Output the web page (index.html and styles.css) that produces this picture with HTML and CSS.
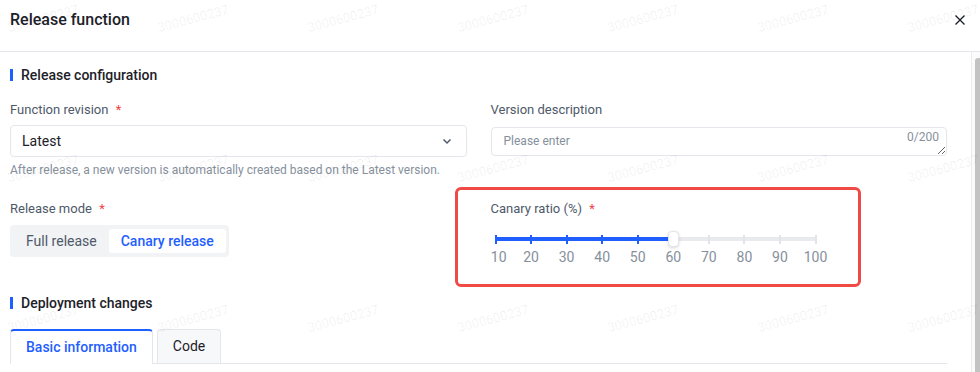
FILE: index.html
```html
<!DOCTYPE html>
<html lang="en">
<head>
  <meta charset="UTF-8" />
  <meta name="viewport" content="width=device-width, initial-scale=1.0"/>
  <title>Release function</title>
  <link rel="stylesheet" href="styles.css">
</head>
<body>
  <div class="modal">
    <!-- Header -->
    <div class="modal-header">
      <h1>Release function</h1>
      <button class="close-btn" aria-label="Close">
        <svg width="10" height="10" viewBox="0 0 10 10"><path d="M0.5 0.5L9.5 9.5M9.5 0.5L0.5 9.5" stroke="#1d2129" stroke-width="1.4" fill="none"/></svg>
      </button>
    </div>

    <!-- Body -->
    <div class="modal-body">
      <div class="content">
        <h2 class="section-title">Release configuration</h2>

        <div class="form-grid">
          <div class="field">
            <label class="field-label">Function revision <span class="req">*</span></label>
            <div class="select">
              <span>Latest</span>
              <svg width="12" height="12" viewBox="0 0 12 12"><path d="M2.5 4.5L6 8L9.5 4.5" stroke="#4e5969" stroke-width="1.5" fill="none"/></svg>
            </div>
            <p class="help">After release, a new version is automatically created based on the Latest version.</p>
          </div>

          <div class="field">
            <label class="field-label">Version description</label>
            <div class="textarea-wrap">
              <textarea placeholder="Please enter"></textarea>
              <span class="counter">0/200</span>
            </div>
          </div>

          <div class="field field-mode">
            <label class="field-label">Release mode <span class="req">*</span></label>
            <div class="segmented">
              <span class="seg-item">Full release</span>
              <span class="seg-item active">Canary release</span>
            </div>
          </div>

          <div class="field highlight">
            <label class="field-label">Canary ratio (%) <span class="req">*</span></label>
            <div class="slider">
              <div class="slider-rail">
                <div class="slider-track"></div>
                <span class="tick on" style="left:0%"></span>
                <span class="tick on" style="left:11.11%"></span>
                <span class="tick on" style="left:22.22%"></span>
                <span class="tick on" style="left:33.33%"></span>
                <span class="tick on" style="left:44.44%"></span>
                <span class="tick" style="left:66.67%"></span>
                <span class="tick" style="left:77.78%"></span>
                <span class="tick" style="left:88.89%"></span>
                <span class="tick" style="left:100%"></span>
                <span class="thumb" style="left:55.56%"></span>
              </div>
              <div class="marks">
                <span style="left:1%">10</span>
                <span style="left:11.11%">20</span>
                <span style="left:22.22%">30</span>
                <span style="left:33.33%">40</span>
                <span style="left:44.44%">50</span>
                <span style="left:55.56%">60</span>
                <span style="left:66.67%">70</span>
                <span style="left:77.78%">80</span>
                <span style="left:88.89%">90</span>
                <span style="left:100%">100</span>
              </div>
            </div>
          </div>
        </div>

        <h2 class="section-title section-deploy">Deployment changes</h2>

        <div class="tabs">
          <span class="tab active">Basic information</span>
          <span class="tab">Code</span>
        </div>
      </div>
      <div class="scrollbar"><div class="scroll-thumb"></div></div>
    </div>

    <!-- Watermark -->
    <div class="watermark">
      <span>3000600237</span><span>3000600237</span><span>3000600237</span><span>3000600237</span><span>3000600237</span><span>3000600237</span><span>3000600237</span>
      <span>3000600237</span><span>3000600237</span><span>3000600237</span><span>3000600237</span><span>3000600237</span><span>3000600237</span><span>3000600237</span>
      <span>3000600237</span><span>3000600237</span><span>3000600237</span><span>3000600237</span><span>3000600237</span><span>3000600237</span><span>3000600237</span>
    </div>
  </div>
</body>
</html>
```

FILE: styles.css
```css
* { margin:0; padding:0; box-sizing:border-box; }
html, body { height:100%; background:#fff; }
body { font-family:Roboto, "Liberation Sans", sans-serif; color:#1d2129; overflow:hidden; }

.modal { position:relative; height:372px; display:flex; flex-direction:column; overflow:hidden; }

/* header */
.modal-header { display:flex; justify-content:space-between; align-items:center; padding:8px 15px 19px 10px; border-bottom:1px solid #e5e6eb; }
.modal-header h1 { font-size:16px; font-weight:500; line-height:24px; color:#1d2129; }
.close-btn { border:0; background:none; width:10px; height:10px; display:flex; }

/* body */
.modal-body { flex:1; display:flex; min-height:0; }
.content { flex:1; padding:12px 24px 0 10px; }
.scrollbar { width:9px; border-left:1px solid #ececec; padding:6px 0 0 3px; background:#fbfbfb; }
.scroll-thumb { height:100%; background:#c3c3c3; border-radius:3px 0 0 0; }

.section-title { position:relative; font-size:14px; font-weight:500; line-height:22px; padding-left:11px; color:#1d2129; }
.section-title::before { content:""; position:absolute; left:0; top:5px; width:3px; height:12px; background:#1f5eff; }
.section-deploy { margin-top:35px; }

/* form */
.form-grid { display:grid; grid-template-columns:1fr 1fr; column-gap:24px; row-gap:20px; margin-top:14px; align-items:start; }
.field-label { display:block; font-size:13px; line-height:20px; color:#4e5969; }
.req { color:#f53f3f; margin-left:4px; }

.select { display:flex; justify-content:space-between; align-items:center; height:32px; margin-top:5px; padding:0 13px 0 11px; border:1px solid #e5e6eb; border-radius:4px; font-size:14px; line-height:30px; color:#1d2129; }
.help { margin-top:4px; font-size:12px; line-height:18px; color:#86909c; }

.textarea-wrap { position:relative; margin-top:7px; }
.textarea-wrap textarea { display:block; width:100%; height:29px; padding:6px 12px; border:1px solid #e5e6eb; border-radius:4px; font-family:inherit; font-size:12px; line-height:15px; color:#1d2129; outline:none; resize:vertical; }
.textarea-wrap textarea::placeholder { color:#86909c; }
.counter { position:absolute; right:8px; top:3px; font-size:12px; color:#86909c; }

.segmented { display:inline-flex; margin-top:6px; padding:4px 3px 4px 4px; background:#f2f3f5; border-radius:4px; }
.seg-item { padding:0 12px; line-height:24px; font-size:14px; color:#4e5969; border-radius:3px; }
.seg-item.active { background:#fff; color:#1f5eff; font-weight:500; }

/* highlighted canary ratio field */
.highlight { margin:-12px 86px -40px -36px; padding:9px 10px 17px 33px; border:3px solid #f04a44; border-radius:6px; }
.slider { margin-top:12px; padding:0 0 0 5px; width:330px; }
.slider-rail { position:relative; height:16px; width:320px; }
.slider-rail::before { content:""; position:absolute; left:0; right:0; top:6px; height:4px; background:#e8eaee; }
.slider-track { position:absolute; left:0; width:55.56%; top:6px; height:4px; background:#1f5eff; }
.tick { position:absolute; top:4px; width:2px; height:9px; margin-left:-1px; background:#e1e4e9; }
.tick.on { background:#1f5eff; }
.thumb { position:absolute; top:0; width:11px; height:16px; margin-left:-5px; background:#fff; border:1px solid #e3e5ea; border-radius:4px; box-shadow:0 1px 3px rgba(0,0,0,0.15); }
.marks { position:relative; height:20px; width:320px; }
.marks span { position:absolute; top:0; transform:translateX(-50%); font-size:14px; line-height:20px; color:#86909c; }

/* tabs */
.tabs { display:flex; gap:4px; margin-top:15px; border-bottom:1px solid #e5e6eb; }
.tab { padding:0 15px; line-height:33px; font-size:14px; color:#1d2129; background:#f7f8fa; border:1px solid #e5e6eb; border-bottom:0; border-radius:4px 4px 0 0; }
.tab.active { background:#fff; color:#1f5eff; font-weight:500; border-top:2px solid #1f5eff; line-height:32px; margin-bottom:-1px; padding-bottom:1px; }

/* watermark overlay */
.watermark { position:absolute; left:-32px; top:-57px; display:grid; grid-template-columns:repeat(7, 150px); grid-auto-rows:150px; pointer-events:none; }
.watermark span { display:flex; align-items:center; justify-content:center; font-size:13px; color:rgba(0,0,0,0.065); transform:rotate(-15deg); }
```
